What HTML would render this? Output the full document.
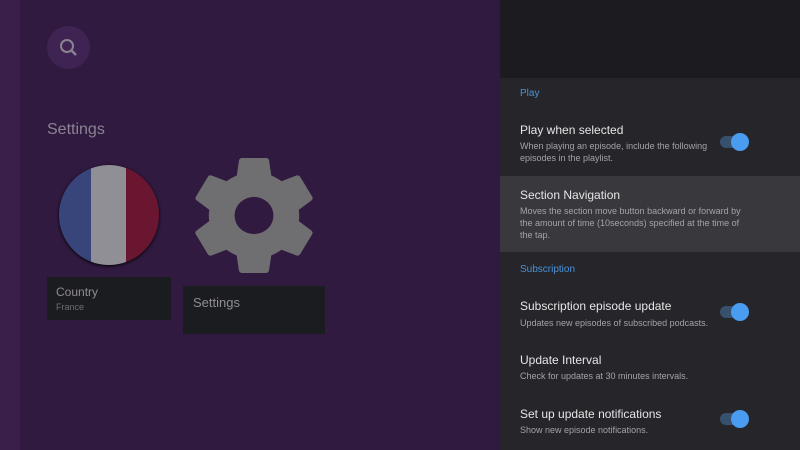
<!DOCTYPE html>
<html><head><style>
body{margin:0;width:800px;height:450px;overflow:hidden;background:#311a40;font-family:"Liberation Sans",sans-serif;position:relative}
.strip{position:absolute;left:0;top:0;width:20px;height:450px;background:#3a1f4b}
.search{position:absolute;left:47px;top:26px;width:43px;height:43px;border-radius:50%;background:#3f2352}
.h{position:absolute;left:47px;top:121px;color:#8a8392;font-size:16px}
.flag{position:absolute;left:59px;top:165px;width:100px;height:100px;border-radius:50%;overflow:hidden;background:linear-gradient(90deg,#37457a 0 32%,#908f95 32% 67%,#6a1630 67%);box-shadow:0 1px 3px #000}
.card{position:absolute;background:#1b1c20;color:#8f8c95}
.rp{position:absolute;left:500px;top:0;width:300px;height:450px;background:#25252a}
.top{position:absolute;left:0;top:0;width:300px;height:78px;background:#1c1b20}
.sec{position:absolute;left:20px;color:#4b92d8;font-size:10px}
.t{position:absolute;left:20px;color:#e6e6e8;font-size:12px}
.d{position:absolute;left:20px;color:#a3a3a8;font-size:9px;line-height:12px;width:215px}
.hl{position:absolute;left:0;top:176px;width:300px;height:76px;background:#38383d}
.sw{position:absolute;left:220px;width:26px;height:12px;border-radius:6px;background:#36506e}
.sw::after{content:"";position:absolute;right:-3px;top:-3px;width:18px;height:18px;border-radius:50%;background:#4a9cf0}
</style></head><body>
<div class="strip"></div>
<div class="search"><svg width="43" height="43"><circle cx="20" cy="20" r="6" fill="none" stroke="#8a8392" stroke-width="2"/><line x1="24.5" y1="24.5" x2="29" y2="29" stroke="#8a8392" stroke-width="2.5"/></svg></div>
<div class="h">Settings</div>
<div class="flag"></div>
<svg style="position:absolute;left:195px;top:155px" width="118" height="121" viewBox="2.6 1.9 18.8 20.2" preserveAspectRatio="none"><path fill="#6f6f71" d="M19.14 12.94c.04-.3.06-.61.06-.94 0-.32-.02-.64-.07-.94l2.03-1.58a.49.49 0 0 0 .12-.61l-1.92-3.32a.49.49 0 0 0-.59-.22l-2.390.96c-.5-.38-1.03-.7-1.620-.94l-.36-2.54a.48.48 0 0 0-.48-.41h-3.84c-.24 0-.43.17-.47.41l-.36 2.54c-.59.24-1.13.57-1.62.94l-2.39-.96a.48.48 0 0 0-.59.22L2.74 8.87c-.12.21-.08.47.12.61l2.030 1.58c-.05.3-.09.63-.09.94s.02.64.07.94l-2.03 1.58a.49.49 0 0 0-.12.61l1.92 3.32c.12.22.37.29.59.22l2.39-.96c.5.38 1.03.7 1.62.94l.36 2.54c.05.24.24.41.48.41h3.84c.24 0 .44-.17.47-.41l.36-2.54c.59-.24 1.13-.56 1.62-.94l2.39.96c.22.08.47 0 .59-.22l1.92-3.32c.12-.22.07-.47-.12-.61l-2.01-1.58zM12 15.1A3.1 3.1 0 1 1 12 8.9a3.1 3.1 0 0 1 0 6.2z"/></svg>
<div class="card" style="left:47px;top:277px;width:124px;height:43px"><div style="position:absolute;left:9px;top:8px;font-size:12px">Country</div><div style="position:absolute;left:9px;top:25px;font-size:9px;color:#6f6c75">France</div></div>
<div class="card" style="left:183px;top:286px;width:142px;height:48px"><div style="position:absolute;left:10px;top:9px;font-size:13px">Settings</div></div>
<div class="rp">
<div class="top"></div>
<div class="hl"></div>
<div class="sec" style="top:88px">Play</div>
<div class="t" style="top:123px">Play when selected</div>
<div class="d" style="top:140px">When playing an episode, include the following episodes in the playlist.</div>
<div class="sw" style="top:136px"></div>
<div class="t" style="top:188px">Section Navigation</div>
<div class="d" style="top:205px;width:230px">Moves the section move button backward or forward by the amount of time (10seconds) specified at the time of the tap.</div>
<div class="sec" style="top:264px">Subscription</div>
<div class="t" style="top:299px">Subscription episode update</div>
<div class="d" style="top:317px">Updates new episodes of subscribed podcasts.</div>
<div class="sw" style="top:306px"></div>
<div class="t" style="top:353px">Update Interval</div>
<div class="d" style="top:370px">Check for updates at 30 minutes intervals.</div>
<div class="t" style="top:407px">Set up update notifications</div>
<div class="d" style="top:424px">Show new episode notifications.</div>
<div class="sw" style="top:413px"></div>
</div>
</body></html>
